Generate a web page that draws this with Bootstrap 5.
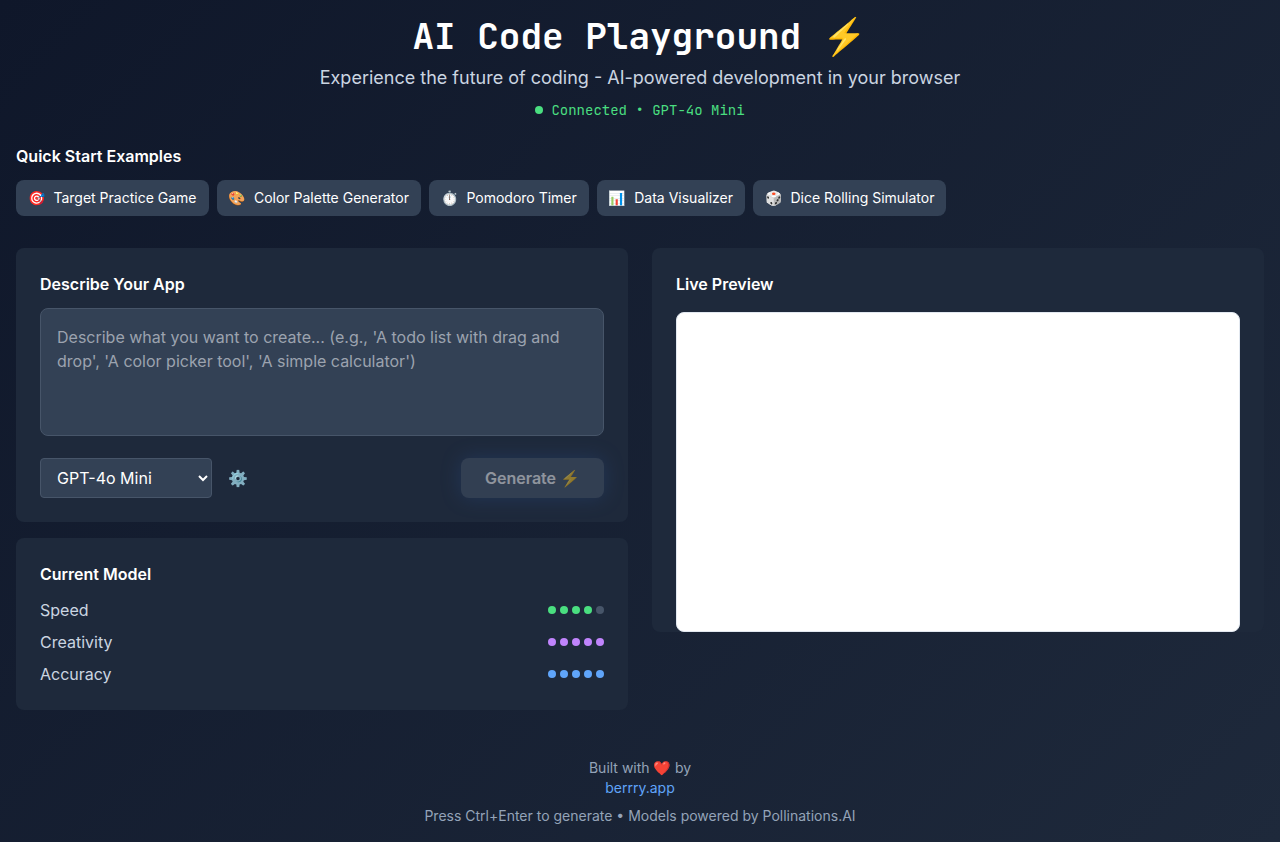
<!DOCTYPE html>
<html lang="en">
<head>
<meta charset="utf-8">
<meta name="viewport" content="width=device-width, initial-scale=1">
<title>AI Code Playground</title>
<link href="https://cdn.jsdelivr.net/npm/bootstrap@5.3.0/dist/css/bootstrap.min.css" rel="stylesheet">
<style>
  body {
    min-height: 100vh;
    font-family: Inter, "Noto Color Emoji", sans-serif;
    font-size: 16px;
    line-height: 24px;
    color: #fff;
    background: linear-gradient(135deg, #0f172a 0%, #1e293b 100%);
  }
  .mono { font-family: "JetBrains Mono", "Noto Color Emoji", "DejaVu Sans Mono", monospace; }
  .emoji { font-family: "Noto Color Emoji", sans-serif; line-height: 1; }
  .page-title { font-size: 36px; line-height: 40px; font-weight: 600; }
  .tagline { font-size: 18px; line-height: 28px; color: #cbd5e1; }
  .text-14 { font-size: 14px; line-height: 20px; }
  .section-title { font-size: 16px; line-height: 24px; font-weight: 600; margin-bottom: 12px; }
  .status { color: #4ade80; }
  .dot { width: 8px; height: 8px; border-radius: 50%; background: #475569; }
  .dot-green { background: #4ade80; }
  .dot-purple { background: #c084fc; }
  .dot-blue { background: #60a5fa; }
  .chip { padding: 8px 12px; border: 0; border-radius: 8px; color: #fff; background: #334155; }
  .chip:hover { color: #fff; background: #475569; }
  .panel { padding: 24px; border-radius: 8px; background: #1e293b; }
  .prompt, .model-select { color: #fff; background: #334155; border: 1px solid #475569; }
  .prompt { height: 128px; padding: 16px; border-radius: 8px; resize: none; margin-bottom: 22px; }
  .prompt::placeholder { color: #9ca3af; }
  .model-select { width: 172px; height: 40px; padding: 0 12px; border-radius: 4px; }
  .btn-gear { padding: 8px; border: 0; background: none; color: #94a3b8; }
  .btn-generate {
    padding: 8px 24px; border: 0; border-radius: 8px; color: #fff; font-weight: 600;
    background: #475569; box-shadow: 0 0 20px rgba(59, 130, 246, .3);
  }
  .btn-generate:disabled { opacity: .5; }
  .label { color: #cbd5e1; }
  .preview { height: 320px; border: 1px solid #e2e8f0; border-radius: 8px; background: #fff; }
  footer { color: #94a3b8; }
  footer a { color: #60a5fa; text-decoration: none; }
</style>
</head>
<body>
<div class="container-fluid p-3">
  <header class="text-center mb-4">
    <h1 class="page-title mono mb-2">AI Code Playground <span class="emoji">⚡</span></h1>
    <p class="tagline mb-2">Experience the future of coding - AI-powered development in your browser</p>
    <div class="status mono text-14 d-flex justify-content-center align-items-center gap-2">
      <span class="dot dot-green"></span><span>Connected • GPT-4o Mini</span>
    </div>
  </header>

  <section class="mb-4 pb-2">
    <h2 class="section-title">Quick Start Examples</h2>
    <div class="d-flex flex-wrap gap-2">
      <button type="button" class="chip text-14 d-flex gap-2"><span>🎯</span><span>Target Practice Game</span></button>
      <button type="button" class="chip text-14 d-flex gap-2"><span>🎨</span><span>Color Palette Generator</span></button>
      <button type="button" class="chip text-14 d-flex gap-2"><span>⏱️</span><span>Pomodoro Timer</span></button>
      <button type="button" class="chip text-14 d-flex gap-2"><span>📊</span><span>Data Visualizer</span></button>
      <button type="button" class="chip text-14 d-flex gap-2"><span>🎲</span><span>Dice Rolling Simulator</span></button>
    </div>
  </section>

  <main class="row gx-4 gy-3">
    <div class="col-12 col-lg-6 d-flex flex-column gap-3">
      <section class="panel">
        <label for="prompt" class="section-title d-block">Describe Your App</label>
        <textarea id="prompt" class="prompt d-block w-100" placeholder="Describe what you want to create... (e.g., 'A todo list with drag and drop', 'A color picker tool', 'A simple calculator')"></textarea>
        <div class="d-flex justify-content-between align-items-center">
          <div class="d-flex align-items-center gap-2">
            <select class="model-select" aria-label="Model">
              <option>GPT-4o Mini</option>
            </select>
            <button type="button" class="btn-gear" aria-label="Settings">⚙️</button>
          </div>
          <button type="button" class="btn-generate" disabled>Generate ⚡</button>
        </div>
      </section>

      <section class="panel">
        <h2 class="section-title">Current Model</h2>
        <div class="d-flex flex-column gap-2">
          <div class="d-flex justify-content-between align-items-center">
            <span class="label">Speed</span>
            <span class="d-flex gap-1"><i class="dot dot-green"></i><i class="dot dot-green"></i><i class="dot dot-green"></i><i class="dot dot-green"></i><i class="dot"></i></span>
          </div>
          <div class="d-flex justify-content-between align-items-center">
            <span class="label">Creativity</span>
            <span class="d-flex gap-1"><i class="dot dot-purple"></i><i class="dot dot-purple"></i><i class="dot dot-purple"></i><i class="dot dot-purple"></i><i class="dot dot-purple"></i></span>
          </div>
          <div class="d-flex justify-content-between align-items-center">
            <span class="label">Accuracy</span>
            <span class="d-flex gap-1"><i class="dot dot-blue"></i><i class="dot dot-blue"></i><i class="dot dot-blue"></i><i class="dot dot-blue"></i><i class="dot dot-blue"></i></span>
          </div>
        </div>
      </section>
    </div>

    <div class="col-12 col-lg-6">
      <section class="panel pb-0">
        <h2 class="section-title mb-3">Live Preview</h2>
        <div class="preview"></div>
      </section>
    </div>
  </main>

  <footer class="text-center text-14 mt-5">
    <div>Built with ❤️ by</div>
    <div class="mb-2"><a href="#">berrry.app</a></div>
    <div>Press Ctrl+Enter to generate • Models powered by Pollinations.AI</div>
  </footer>
</div>
<script src="https://cdn.jsdelivr.net/npm/bootstrap@5.3.0/dist/js/bootstrap.bundle.min.js"></script>
</body>
</html>
